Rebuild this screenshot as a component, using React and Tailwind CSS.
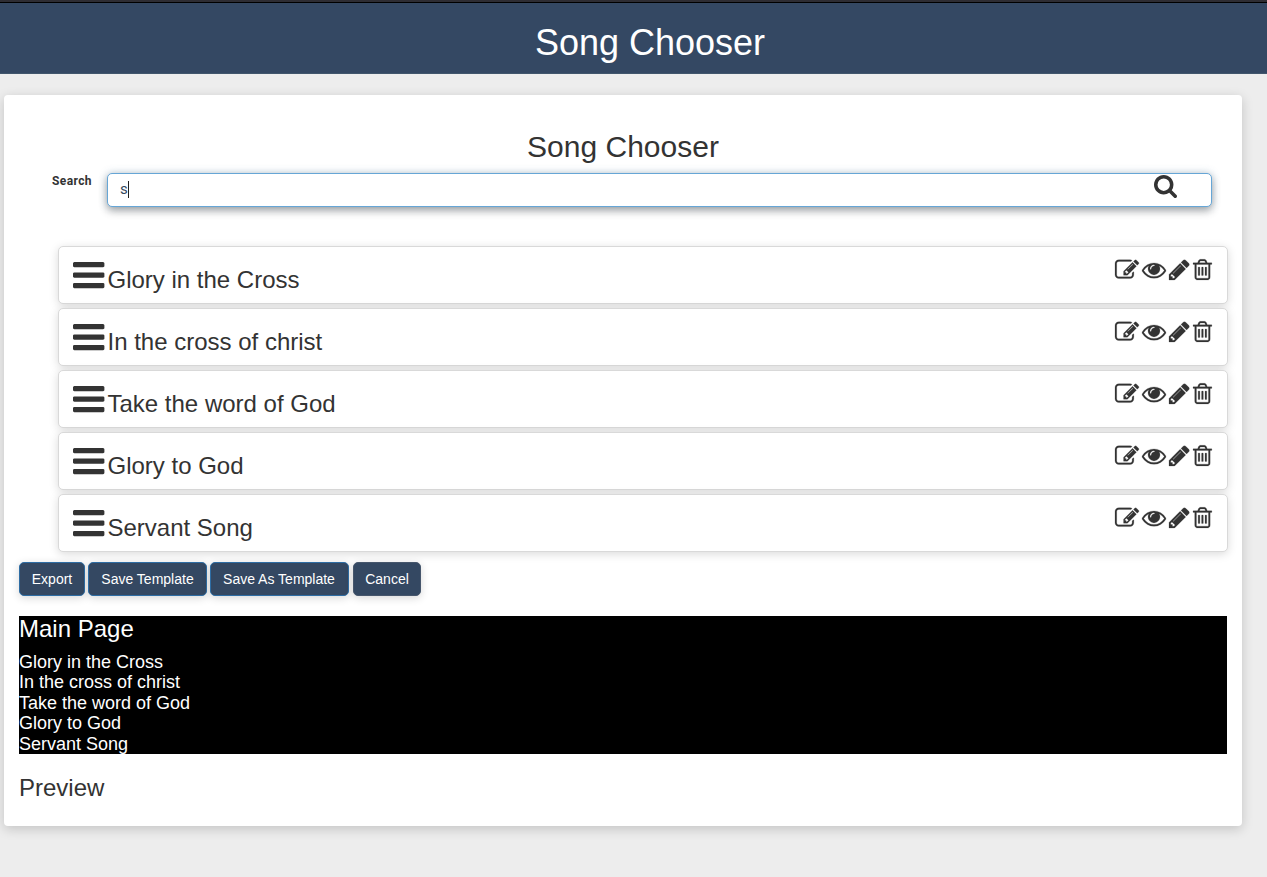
const songs = [
  "Glory in the Cross",
  "In the cross of christ",
  "Take the word of God",
  "Glory to God",
  "Servant Song",
];

const paths = {
  bars: "M1664 1344v128q0 26-19 45t-45 19h-1408q-26 0-45-19t-19-45v-128q0-26 19-45t45-19h1408q26 0 45 19t19 45zm0-512v128q0 26-19 45t-45 19h-1408q-26 0-45-19t-19-45v-128q0-26 19-45t45-19h1408q26 0 45 19t19 45zm0-512v128q0 26-19 45t-45 19h-1408q-26 0-45-19t-19-45v-128q0-26 19-45t45-19h1408q26 0 45 19t19 45z",
  search: "M1216 832q0-185-131.5-316.5t-316.5-131.5-316.5 131.5-131.5 316.5 131.5 316.5 316.5 131.5 316.5-131.5 131.5-316.5zm512 832q0 52-38 90t-90 38q-54 0-90-38l-343-342q-179 124-399 124-143 0-273.5-55.5t-225-150-150-225-55.5-273.5 55.5-273.5 150-225 225-150 273.5-55.5 273.5 55.5 225 150 150 225 55.5 273.5q0 220-124 399l343 343q37 37 37 90z",
  edit: "M888 1184l116-116-152-152-116 116v56h96v96h56zm440-720q-16-16-33 1l-350 350q-17 17-1 33t33-1l350-350q17-17 1-33zm80 594v190q0 119-84.5 203.5t-203.5 84.5h-832q-119 0-203.5-84.5t-84.5-203.5v-832q0-119 84.5-203.5t203.5-84.5h832q63 0 117 25 15 7 18 23 3 17-9 29l-49 49q-14 14-32 8-23-6-45-6h-832q-66 0-113 47t-47 113v832q0 66 47 113t113 47h832q66 0 113-47t47-113v-126q0-13 9-22l64-64q15-15 35-7t20 29zm-96-738l288 288-672 672h-288v-288zm444 132l-92 92-288-288 92-92q28-28 68-28t68 28l152 152q28 28 28 68t-28 68z",
  eye: "M1664 960q-152-236-381-353 61 104 61 225 0 185-131.5 316.5t-316.5 131.5-316.5-131.5-131.5-316.5q0-121 61-225-229 117-381 353 133 205 333.5 326.5t434.5 121.5 434.5-121.5 333.5-326.5zm-720-384q0-20-14-34t-34-14q-125 0-214.5 89.5t-89.5 214.5q0 20 14 34t34 14 34-14 14-34q0-86 61-147t147-61q20 0 34-14t14-34zm848 384q0 34-20 69-140 230-376.5 368.5t-499.5 138.5-499.5-139-376.5-368q-20-35-20-69t20-69q140-229 376.5-368t499.5-139 499.5 139 376.5 368q20 35 20 69z",
  pencil: "M491 1536l91-91-235-235-91 91v107h128v128h107zm523-928q0-22-22-22-10 0-17 7l-542 542q-7 7-7 17 0 22 22 22 10 0 17-7l542-542q7-7 7-17zm-54-192l416 416-832 832h-416v-416zm683 96q0 53-37 90l-166 166-416-416 166-165q36-38 90-38 53 0 91 38l235 234q37 39 37 91z",
  trash: "M704 736v576q0 14-9 23t-23 9h-64q-14 0-23-9t-9-23v-576q0-14 9-23t23-9h64q14 0 23 9t9 23zm256 0v576q0 14-9 23t-23 9h-64q-14 0-23-9t-9-23v-576q0-14 9-23t23-9h64q14 0 23 9t9 23zm256 0v576q0 14-9 23t-23 9h-64q-14 0-23-9t-9-23v-576q0-14 9-23t23-9h64q14 0 23 9t9 23zm128 724v-948h-896v948q0 22 7 40.5t14.5 27 10.5 8.5h832q3 0 10.5-8.5t14.5-27 7-40.5zm-672-1076h448l-48-117q-7-9-17-11h-317q-10 2-17 11zm928 32v64q0 14-9 23t-23 9h-96v948q0 83-47 143.5t-113 60.5h-832q-66 0-113-58.5t-47-141.5v-952h-96q-14 0-23-9t-9-23v-64q0-14 9-23t23-9h309l70-167q15-37 54-63t79-26h320q40 0 79 26t54 63l70 167h309q14 0 23 9t9 23z",
};

function Icon({ name, viewBox = "0 0 1792 1792", className }) {
  return (
    <svg viewBox={viewBox} className={`block shrink-0 overflow-visible fill-current ${className}`} aria-hidden="true">
      <path d={paths[name]} />
    </svg>
  );
}

function SongRow({ title }) {
  return (
    <li className="flex h-[58px] items-start justify-between rounded-[5px] border border-[#d9d9d9] bg-white pr-[15px] pl-[14.3px] shadow-[0_2px_10px_rgba(0,0,0,0.15)]">
      <div className="flex">
        <Icon name="bars" viewBox="128 256 1536 1280" className="mt-[15px] h-[26.2px] w-[31.4px]" />
        <h3 className="mt-[20px] ml-[2.8px] text-[24px] leading-[26px]">{title}</h3>
      </div>
      <div className="mt-[11px] flex stroke-current stroke-[16px]">
        <Icon name="edit" className="h-6 w-6" />
        <Icon name="eye" viewBox="0 20 1792 1792" className="ml-[3px] h-6 w-6" />
        <Icon name="pencil" viewBox="128 20 1536 1792" className="ml-[3px] h-6 w-[20.6px]" />
        <Icon name="trash" viewBox="192 30 1408 1792" className="ml-[3.8px] h-6 w-[18.9px]" />
      </div>
    </li>
  );
}

function Button({ children, className }) {
  return (
    <button
      className={`h-[34px] rounded-[5px] border bg-[#344862] text-center text-[14px] leading-5 text-white shadow-[0_2px_8px_rgba(0,0,0,0.16)] ${className}`}
    >
      {children}
    </button>
  );
}

export default function App() {
  return (
    <div className="min-h-[877px] bg-[#ededed] font-['Liberation_Sans',Arial,sans-serif] text-[#333]">
      <div className="h-[3px] border-b border-black bg-[#2e2d33]" />
      <header className="h-[71px] border-b border-[#41566c] bg-[#344863] pt-5 pl-[33px] text-center">
        <h1 className="text-[36px] leading-[40px] text-white">Song Chooser</h1>
      </header>
      <main className="mt-[21px] ml-[4px] h-[731px] w-[1238px] rounded-[4px] bg-white px-[15px] pt-[35px] shadow-[0_3px_12px_rgba(0,0,0,0.18)]">
        <h2 className="text-center text-[30px] leading-[33px]">Song Chooser</h2>
        <div className="mt-[10px] flex pr-[15px]">
          <label className="w-[88px] pl-[33px] font-[Roboto,sans-serif] text-[12px] leading-[16px] font-bold tracking-[0.4px]">Search</label>
          <div className="flex h-[34px] flex-1 justify-between rounded-[5px] border border-[#66a6d6] bg-white pr-[34px] pl-[12px] shadow-[0_4px_8px_rgba(0,0,0,0.3),0_0_8px_rgba(70,120,160,0.3)]">
            <div className="flex h-[31px] items-center font-[Roboto,sans-serif] text-[15px] text-[#34495e]">
              s<span className="h-[17px] w-px bg-[#222]" />
            </div>
            <Icon name="search" viewBox="64 128 1664 1664" className="mt-[1px] h-[23px] w-[23px]" />
          </div>
        </div>
        <ul className="mt-[39px] -mr-px ml-[39px] flex flex-col gap-[4px]">
          {songs.map((s) => (
            <SongRow key={s} title={s} />
          ))}
        </ul>
        <div className="mt-[10px] flex gap-[3px]">
          <Button className="w-[66px] border-[#2e6da4]">Export</Button>
          <Button className="w-[119px] border-[#2e6da4]">Save Template</Button>
          <Button className="w-[139px] border-[#2e6da4] pr-px">Save As Template</Button>
          <Button className="ml-[1px] w-[68px] border-[#46566c]">Cancel</Button>
        </div>
        <section className="mt-5 h-[138px] bg-black text-white">
          <h3 className="text-[24px] leading-[26px]">Main Page</h3>
          <div className="mt-[10px] text-[18px] leading-[20.4px]">
            {songs.map((s) => (
              <p key={s}>{s}</p>
            ))}
          </div>
        </section>
        <h3 className="mt-[21px] text-[24px] leading-[26px]">Preview</h3>
      </main>
    </div>
  );
}
